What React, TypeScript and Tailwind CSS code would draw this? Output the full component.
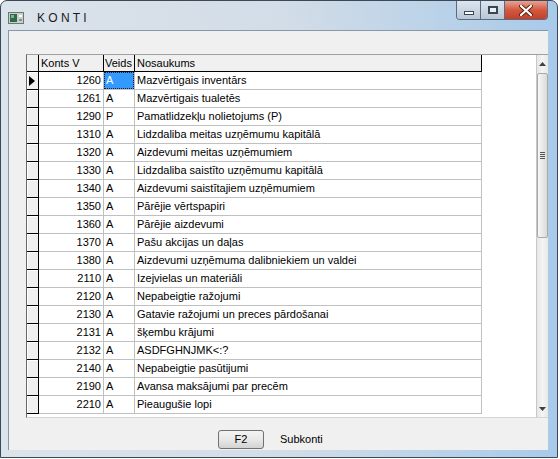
const rows: [string, string, string][] = [
    ["1260", "A", "Mazvērtigais inventārs"],
    ["1261", "A", "Mazvērtigais tualetēs"],
    ["1290", "P", "Pamatlidzekļu nolietojums (P)"],
    ["1310", "A", "Lidzdaliba meitas uzņēmumu kapitālā"],
    ["1320", "A", "Aizdevumi meitas uzņēmumiem"],
    ["1330", "A", "Lidzdaliba saistīto uzņēmumu kapitālā"],
    ["1340", "A", "Aizdevumi saistītajiem uzņēmumiem"],
    ["1350", "A", "Pārējie vērtspapiri"],
    ["1360", "A", "Pārējie aizdevumi"],
    ["1370", "A", "Pašu akcijas un daļas"],
    ["1380", "A", "Aizdevumi uzņēmuma dalibniekiem un valdei"],
    ["2110", "A", "Izejvielas un materiāli"],
    ["2120", "A", "Nepabeigtie ražojumi"],
    ["2130", "A", "Gatavie ražojumi un preces pārdošanai"],
    ["2131", "A", "šķembu krājumi"],
    ["2132", "A", "ASDFGHNJMK<:?"],
    ["2140", "A", "Nepabeigtie pasūtijumi"],
    ["2190", "A", "Avansa maksājumi par precēm"],
    ["2210", "A", "Pieaugušie lopi"],
];

function AppIcon() {
    return (
        <svg width="16" height="12" viewBox="0 0 16 12">
            <rect x="0.5" y="0.5" width="15" height="11" fill="#c9d1cc" stroke="#6b7872" />
            <rect x="2" y="2" width="7" height="8" fill="#2f6a4c" />
            <rect x="3" y="3" width="3" height="3" fill="#7fb08f" />
            <rect x="11" y="3" width="3" height="2" fill="#ffffff" />
            <rect x="11" y="7" width="3" height="2" fill="#8c8c8c" />
        </svg>
    );
}

function CaptionButtons() {
    return (
        <div className="flex h-[19px] mr-[9px] rounded-b-[4px] border border-t-0 border-[#5a6b7d] overflow-hidden">
            <div className="w-[24px] flex items-center justify-center bg-gradient-to-b from-[#dde6ef] to-[#b8c7d6] border-r border-[#5a6b7d]">
                <div className="w-[10px] h-[4px] mt-[5px] bg-white border border-[#3a4654]" />
            </div>
            <div className="w-[24px] flex items-center justify-center bg-gradient-to-b from-[#dde6ef] to-[#b8c7d6] border-r border-[#5a6b7d]">
                <div className="w-[10px] h-[8px] border-2 border-[#3a4654] bg-white/60" />
            </div>
            <div className="w-[42px] flex items-center justify-center bg-gradient-to-b from-[#e8a293] via-[#d2583f] to-[#c4402c]">
                <svg width="14" height="11" viewBox="0 0 14 11">
                    <path d="M2 1 L12 10 M12 1 L2 10" stroke="#5a1a10" strokeWidth="4" strokeLinecap="round" />
                    <path d="M2 1 L12 10 M12 1 L2 10" stroke="#ffffff" strokeWidth="2.2" strokeLinecap="round" />
                </svg>
            </div>
        </div>
    );
}

function Pointer() {
    return (
        <svg width="6" height="10" viewBox="0 0 6 10">
            <path d="M0 0 L6 5 L0 10 Z" fill="#000" />
        </svg>
    );
}

function ScrollBar() {
    return (
        <div className="w-[12px] flex flex-col bg-gradient-to-r from-[#e6e6e6] via-[#f4f4f4] to-[#e9e9e9] border-l border-[#c8c8c8]">
            <div className="h-[17px] flex items-center justify-center">
                <svg width="7" height="4" viewBox="0 0 7 4">
                    <path d="M0 4 L3.5 0 L7 4 Z" fill="#404040" />
                </svg>
            </div>
            <div className="mt-[1px] h-[165px] rounded-[2px] border border-[#a9a9a9] bg-gradient-to-r from-[#f7f7f7] to-[#dadada] flex items-center justify-center">
                <div className="flex flex-col gap-[1px]">
                    <div className="w-[5px] h-[1px] bg-[#555]" />
                    <div className="w-[5px] h-[1px] bg-[#555]" />
                    <div className="w-[5px] h-[1px] bg-[#555]" />
                    <div className="w-[5px] h-[1px] bg-[#555]" />
                </div>
            </div>
            <div className="flex-1" />
            <div className="h-[17px] flex items-center justify-center">
                <svg width="7" height="4" viewBox="0 0 7 4">
                    <path d="M0 0 L3.5 4 L7 0 Z" fill="#404040" />
                </svg>
            </div>
        </div>
    );
}

export default function App() {
    return (
        <div className="w-[560px] h-[459px] bg-white font-['Liberation_Sans',Arial,sans-serif] text-[11px] text-black">
            <div className="w-[558px] h-[458px] flex flex-col rounded-t-[7px] border border-[#3b4856] bg-gradient-to-r from-[#dbe3eb] via-[#d3dde7] to-[#a8cae9] overflow-hidden">
                {/* title bar */}
                <div className="h-[29px] shrink-0 flex items-start">
                    <div className="flex items-center h-[29px] pt-[4px] pl-[7px]">
                        <AppIcon />
                        <span className="ml-[13px] text-[12px] text-[#1a1a1a]">K O N T I</span>
                    </div>
                    <div className="ml-auto">
                        <CaptionButtons />
                    </div>
                </div>

                {/* frame sides + client */}
                <div className="flex h-[420px] pl-[7px] pr-[9px]">
                    <div className="w-[540px] h-[420px] flex flex-col bg-[#f0f0f0] border-t border-l border-[#8797a8] pt-[23px] pl-[17px]">
                        {/* grid */}
                        <div className="w-[522px] h-[364px] flex bg-white border-t border-[#a0a0a0] border-l border-l-[#696969] border-b border-b-[#d4d4d4]">
                            <div className="flex-1 flex flex-col">
                                {/* header */}
                                <div className="flex h-[17px] shrink-0">
                                    <div className="w-[12px] bg-[#f0f0f0] border-r border-b border-black" />
                                    <div className="w-[65px] pl-[2px] flex items-center bg-[#f0f0f0] border-r border-b border-black">Konts V</div>
                                    <div className="w-[31px] pl-[1px] flex items-center bg-[#f0f0f0] border-r border-b border-black">Veids</div>
                                    <div className="w-[347px] pl-[2px] flex items-center bg-[#f0f0f0] border-r border-b border-black">Nosaukums</div>
                                </div>
                                {/* rows */}
                                {rows.map(([konts, veids, nos], i) => (
                                    <div key={konts} className="flex h-[18px] shrink-0">
                                        <div className="w-[12px] flex items-center pl-[2px] bg-[#f0f0f0] border-r border-b border-black shadow-[inset_1px_1px_0_#ffffff]">
                                            {i === 0 && <Pointer />}
                                        </div>
                                        <div className="w-[65px] pr-[2px] flex items-center justify-end border-r border-b border-[#c0c0c0]">{konts}</div>
                                        {i === 0 ? (
                                            <div className="w-[31px] flex border-r border-b border-[#c0c0c0]">
                                                <div className="flex-1 flex items-center pl-[1px] bg-[#3399ff] text-white border border-dotted border-[#1a1a1a]">{veids}</div>
                                            </div>
                                        ) : (
                                            <div className="w-[31px] pl-[2px] flex items-center border-r border-b border-[#c0c0c0]">{veids}</div>
                                        )}
                                        <div className="w-[347px] pl-[2px] flex items-center border-r border-b border-[#c0c0c0] whitespace-nowrap">{nos}</div>
                                    </div>
                                ))}
                            </div>
                            <ScrollBar />
                        </div>

                        {/* bottom buttons */}
                        <div className="flex items-center mt-[12px] ml-[192px]">
                            <div className="w-[46px] h-[19px] flex items-center justify-center rounded-[3px] border border-[#707070] bg-gradient-to-b from-[#f3f3f3] via-[#e8e8e8] to-[#d3d3d3]">F2</div>
                            <span className="ml-[16px]">Subkonti</span>
                        </div>
                    </div>
                </div>
            </div>
        </div>
    );
}
